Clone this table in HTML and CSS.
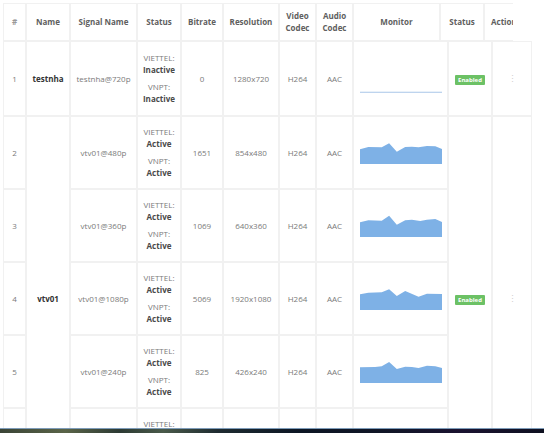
FILE: index.html
```html
<!DOCTYPE html>
<html>
<head>
<meta charset="utf-8">
<link rel="stylesheet" href="styles.css">
</head>
<body>
<div class="page">
  <div class="head-wrap">
    <table class="tbl head">
      <colgroup>
        <col class="c-no"><col class="c-name"><col class="c-sig"><col class="c-st"><col class="c-br"><col class="c-res"><col class="c-vc"><col class="c-ac"><col class="h-mon"><col class="h-st"><col class="h-act">
      </colgroup>
      <tr>
        <th class="hash">#</th>
        <th>Name</th>
        <th>Signal Name</th>
        <th>Status</th>
        <th>Bitrate</th>
        <th>Resolution</th>
        <th>Video<br>Codec</th>
        <th>Audio<br>Codec</th>
        <th>Monitor</th>
        <th>Status</th>
        <th class="act-h">Action</th>
      </tr>
    </table>
  </div>
  <table class="tbl body">
    <colgroup>
      <col class="c-no"><col class="c-name"><col class="c-sig"><col class="c-st"><col class="c-br"><col class="c-res"><col class="c-vc"><col class="c-ac"><col class="c-mon"><col class="c-st2"><col class="c-act">
    </colgroup>
    <tr class="first">
      <td>1</td>
      <td class="name">testnha</td>
      <td>testnha@720p</td>
      <td><div class="net">VIETTEL:<b>Inactive</b></div><div class="net">VNPT:<b>Inactive</b></div></td>
      <td>0</td>
      <td>1280x720</td>
      <td>H264</td>
      <td>AAC</td>
      <td class="mon"><svg class="chart flat" viewBox="265 85 245 72" preserveAspectRatio="none"><line x1="265" y1="155" x2="510" y2="155" stroke="#a9c6e8" stroke-width="3"/></svg></td>
      <td><span class="badge">Enabled</span></td>
      <td class="dots">⋮</td>
    </tr>
    <tr>
      <td>2</td>
      <td class="name" rowspan="5">vtv01</td>
      <td>vtv01@480p</td>
      <td><div class="net">VIETTEL:<b>Active</b></div><div class="net">VNPT:<b>Active</b></div></td>
      <td>1651</td>
      <td>854x480</td>
      <td>H264</td>
      <td>AAC</td>
      <td class="mon"><svg class="chart" viewBox="265 85 245 72" preserveAspectRatio="none"><polygon points="265,113 290,106 330,107 352,95 375,120 400,106 420,105 440,107 465,103 490,104 510,112 510,157 265,157" fill="#7eb1e6"/></svg></td>
      <td rowspan="5"><span class="badge">Enabled</span></td>
      <td rowspan="5" class="dots">⋮</td>
    </tr>
    <tr>
      <td>3</td>
      <td>vtv01@360p</td>
      <td><div class="net">VIETTEL:<b>Active</b></div><div class="net">VNPT:<b>Active</b></div></td>
      <td>1069</td>
      <td>640x360</td>
      <td>H264</td>
      <td>AAC</td>
      <td class="mon"><svg class="chart" viewBox="265 85 245 72" preserveAspectRatio="none"><polygon points="265,113 290,107 330,108 352,93 375,120 400,107 420,105 445,109 465,105 490,103 510,112 510,157 265,157" fill="#7eb1e6"/></svg></td>
    </tr>
    <tr>
      <td>4</td>
      <td>vtv01@1080p</td>
      <td><div class="net">VIETTEL:<b>Active</b></div><div class="net">VNPT:<b>Active</b></div></td>
      <td>5069</td>
      <td>1920x1080</td>
      <td>H264</td>
      <td>AAC</td>
      <td class="mon"><svg class="chart" viewBox="265 85 245 72" preserveAspectRatio="none"><polygon points="265,110 290,105 330,104 352,95 375,115 400,100 440,117 465,108 510,109 510,157 265,157" fill="#7eb1e6"/></svg></td>
    </tr>
    <tr>
      <td>5</td>
      <td>vtv01@240p</td>
      <td><div class="net">VIETTEL:<b>Active</b></div><div class="net">VNPT:<b>Active</b></div></td>
      <td>825</td>
      <td>426x240</td>
      <td>H264</td>
      <td>AAC</td>
      <td class="mon"><svg class="chart" viewBox="265 85 245 72" preserveAspectRatio="none"><polygon points="265,110 310,109 330,107 352,94 375,115 400,108 420,109 440,112 465,105 490,107 510,112 510,157 265,157" fill="#7eb1e6"/></svg></td>
    </tr>
    <tr>
      <td>6</td>
      <td>vtv01@144p</td>
      <td><div class="net">VIETTEL:<b>Active</b></div><div class="net">VNPT:<b>Active</b></div></td>
      <td>412</td>
      <td>256x144</td>
      <td>H264</td>
      <td>AAC</td>
      <td class="mon"><svg class="chart" viewBox="265 85 245 72" preserveAspectRatio="none"><polygon points="265,112 300,108 330,108 352,96 375,116 400,107 440,110 465,106 510,111 510,157 265,157" fill="#7eb1e6"/></svg></td>
    </tr>
  </table>
</div>
<div class="taskbar"></div>
</body>
</html>
```
FILE: styles.css
```css
html, body {
  margin: 0;
  padding: 0;
  background: #ffffff;
  overflow: hidden;
  height: 433px;
}
body {
  font-family: "Open Sans", "Noto Sans", sans-serif;
  font-size: 8px;
  color: #7a7a7a;
}
.page {
  padding: 3px 0 0 3px;
}
.tbl {
  border-collapse: separate;
  border-spacing: 0;
  table-layout: fixed;
}
.tbl th, .tbl td {
  border: 1px solid #f1f1f1;
  text-align: center;
  vertical-align: middle;
  padding: 0 3px;
  box-sizing: border-box;
}
.head-wrap {
  width: 510px;
  overflow: hidden;
}
.head {
  width: 527px;
}
.head th {
  height: 38px;
  font-weight: 700;
  color: #606060;
  line-height: 12px;
  white-space: nowrap;
}
.head th.hash {
  color: #999;
}
.head th.act-h {
  text-align: left;
  padding-left: 6px;
}
.body {
  width: 529px;
}
.body td {
  height: 73px;
  padding: 9px 3px;
  line-height: 12px;
}
.body tr.first td {
  height: 75px;
}
.c-no { width: 23px; }
.c-name { width: 44px; }
.c-sig { width: 67px; }
.c-st { width: 44px; }
.c-br { width: 42px; }
.c-res { width: 56px; }
.c-vc { width: 37px; }
.c-ac { width: 37px; }
.c-mon { width: 95px; }
.c-st2 { width: 44px; }
.c-act { width: 40px; }
.h-mon { width: 87px; }
.h-st { width: 44px; }
.h-act { width: 46px; }

.name {
  font-weight: 700;
  color: #333;
}
.net {
  color: #7a7a7a;
}
.net + .net {
  margin-top: 5px;
}
.net b {
  display: block;
  font-weight: 700;
  color: #4a4a4a;
}
.mon {
  padding: 0 6px;
}
.chart {
  display: block;
  width: 82px;
  height: 24px;
  margin: 0 auto 2px;
}
.chart.flat {
  margin-bottom: 0;
  margin-top: 4px;
}
.badge {
  display: inline-block;
  background: #6cc165;
  color: #fff;
  font-weight: 700;
  font-size: 6px;
  line-height: 10px;
  padding: 0 3px;
  border-radius: 1px;
}
.dots {
  color: #d0d0d0;
  font-size: 9px;
}
.taskbar {
  position: fixed;
  left: 0;
  right: 0;
  bottom: 0;
  height: 4px;
  border-top: 1px solid #7d9bb8;
  background: linear-gradient(90deg, #3a4436 0%, #5a6448 12%, #2c3a33 22%, #4a5a4a 30%, #1e2b30 40%, #0c1624 55%, #101626 70%, #1a1230 85%, #0e1020 100%);
}
```
